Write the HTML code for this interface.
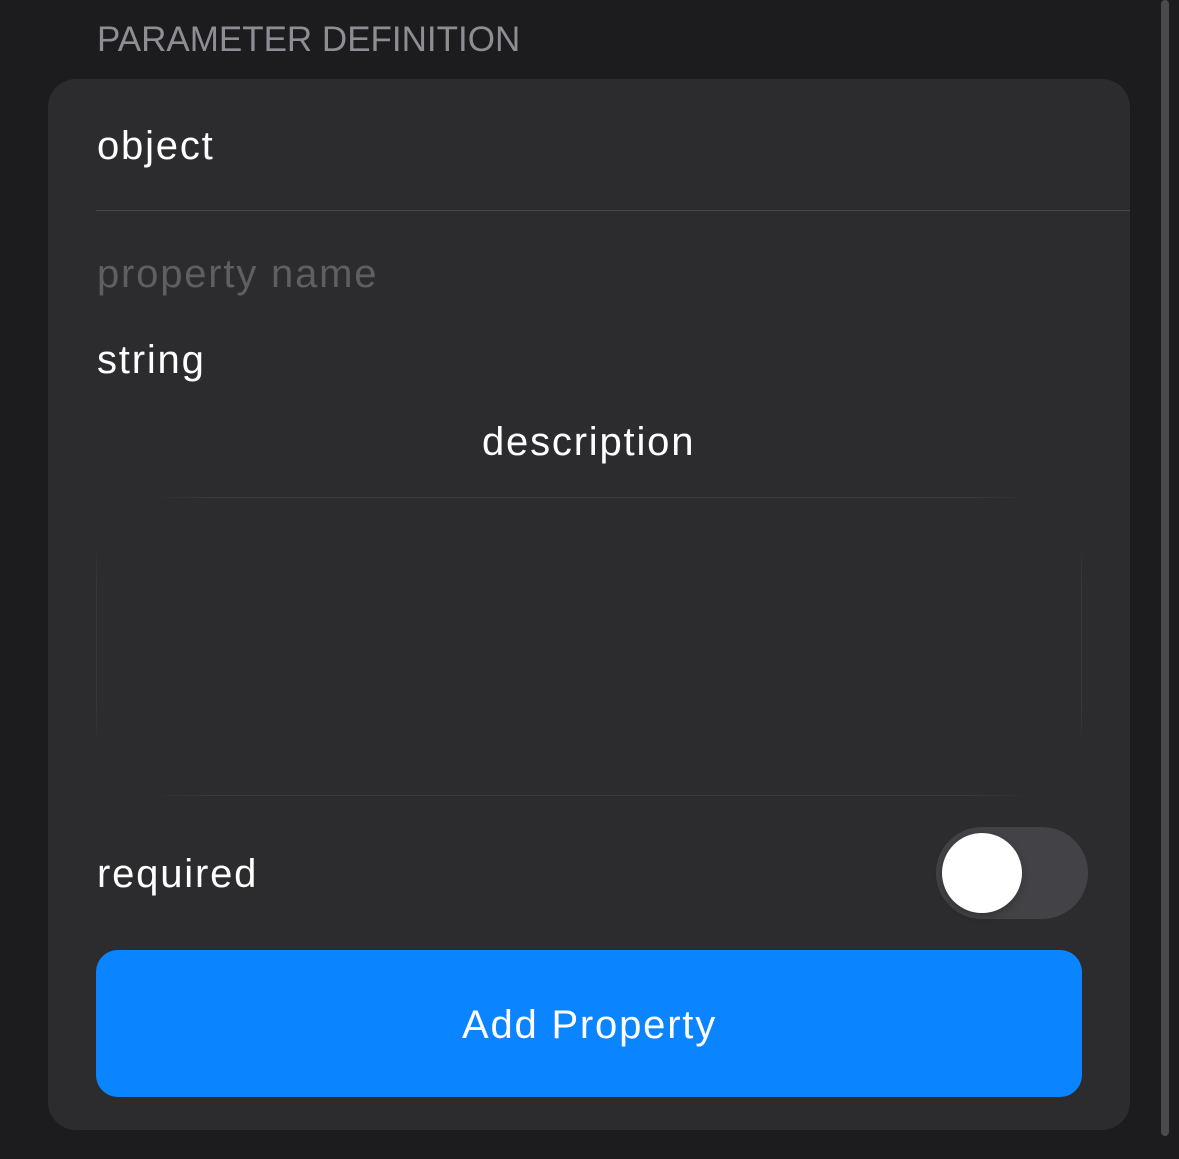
<!DOCTYPE html>
<html><head><style>
html,body{margin:0;padding:0;width:1179px;height:1159px;background:#1c1c1e;overflow:hidden;font-family:"Liberation Sans",sans-serif;}
.abs{position:absolute;}
.t{position:absolute;white-space:nowrap;line-height:1;}
.b{letter-spacing:1.8px;}
</style></head><body>
<div class="t" style="left:97px;top:22px;font-size:35px;color:#8d8d93;">PARAMETER DEFINITION</div>
<div class="abs" style="left:48px;top:79px;width:1082px;height:1051px;background:#2c2c2e;border-radius:28px;"></div>
<div class="t b" style="left:97px;top:126px;font-size:40px;color:#fff;">object</div>
<div class="abs" style="left:96px;top:210px;width:1034px;height:1px;background:#48484a;"></div>
<div class="t b" style="left:97px;top:254px;font-size:40px;color:#5f5f63;">property name</div>
<div class="t b" style="left:97px;top:340px;font-size:40px;color:#fff;">string</div>
<div class="t b" style="left:482px;top:422px;font-size:40px;color:#fff;">description</div>
<div class="abs" style="left:150px;top:497px;width:880px;height:1px;background:linear-gradient(90deg,transparent,#3c3c3f 8%,#3c3c3f 92%,transparent);"></div>
<div class="abs" style="left:150px;top:795px;width:880px;height:1px;background:linear-gradient(90deg,transparent,#3c3c3f 8%,#3c3c3f 92%,transparent);"></div>
<div class="abs" style="left:96px;top:545px;width:1px;height:200px;background:linear-gradient(transparent,#38383b 20%,#38383b 80%,transparent);"></div>
<div class="abs" style="left:1081px;top:545px;width:1px;height:200px;background:linear-gradient(transparent,#3a3a3d 20%,#3a3a3d 80%,transparent);"></div>
<div class="t b" style="left:97px;top:854px;font-size:40px;color:#fff;">required</div>
<div class="abs" style="left:936px;top:827px;width:152px;height:92px;border-radius:46px;background:#434347;"></div>
<div class="abs" style="left:942px;top:833px;width:80px;height:80px;border-radius:50%;background:#fff;box-shadow:0 3px 8px rgba(0,0,0,0.25);"></div>
<div class="abs" style="left:96px;top:950px;width:986px;height:147px;border-radius:22px;background:#0a84ff;"></div>
<div class="t b" style="left:0;width:1179px;text-align:center;top:1005px;font-size:40px;color:#fff;">Add Property</div>
<div class="abs" style="left:1161px;top:0;width:8px;height:1136px;border-radius:4px;background:#4a4a4c;"></div>
</body></html>
